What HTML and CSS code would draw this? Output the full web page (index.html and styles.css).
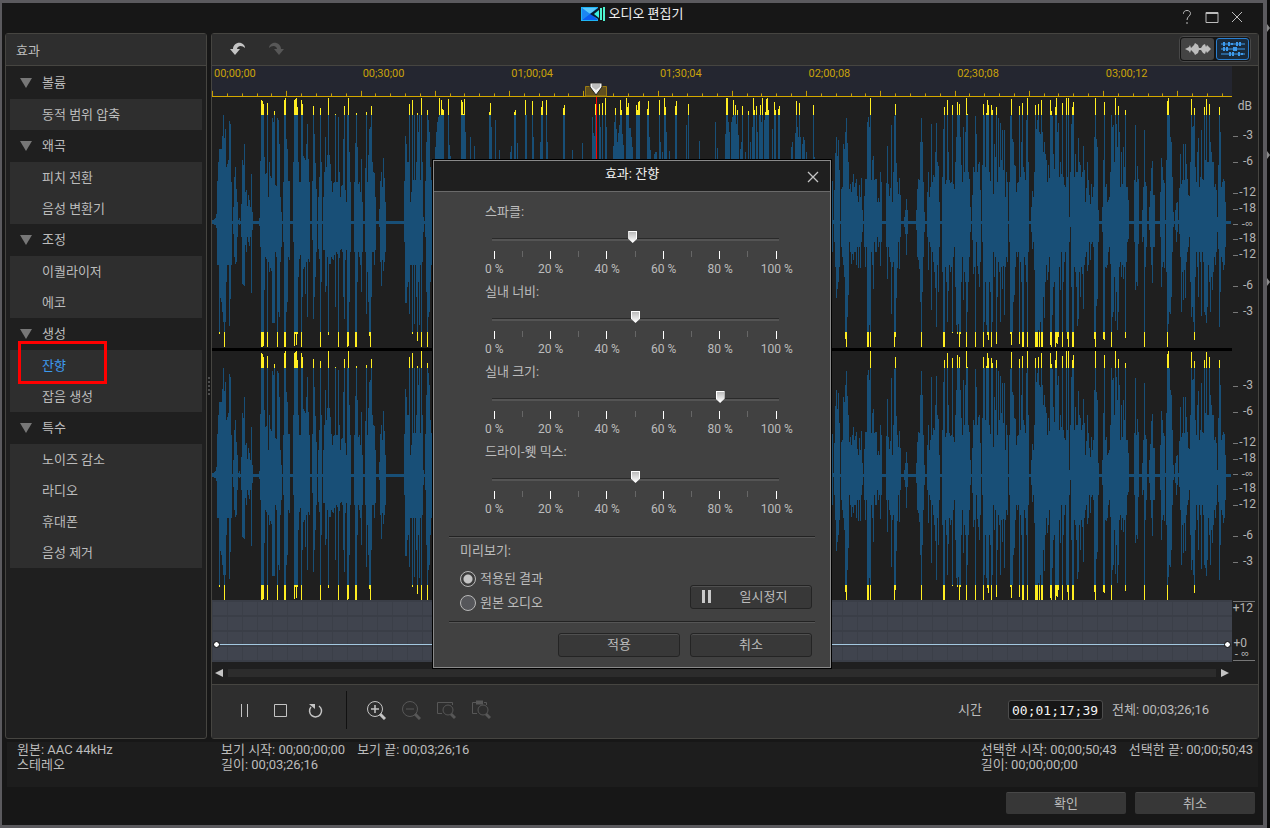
FILE: index.html
```
<!DOCTYPE html>
<html lang="ko">
<head>
    <meta charset="UTF-8">
    <meta name="viewport" content="width=device-width, initial-scale=1.0">
    <title>오디오 편집기</title>

    <link rel="stylesheet" href="styles.css">
</head>

<body>

    <div class="window">
        <div class="titlebar">
            <div class="app-title">
                <svg class="app-logo" width="24" height="14" viewBox="0 0 24 14">
                    <rect x="0" y="0" width="17" height="14" fill="#1fb4f5"/>
                    <path d="M1 13L9 6L17 13Z" fill="#0a5df0"/>
                    <path d="M1 1H16L9 7Z" fill="#5cc8fb"/>
                    <path d="M1 1V13L9 7Z" fill="#1c86f2"/>
                    <path d="M17 1L9 7L17 12Z" fill="#071a33"/>
                    <path d="M18 3V11L13 7Z" fill="#3cf0e0"/>
                    <path d="M20 1V13M23 0V14" stroke="#4df5d0" stroke-width="2"/>
                </svg>
                <h1>오디오 편집기</h1>
            </div>
            <div class="window-controls">
                <button type="button" aria-label="도움말">
                    <svg width="14" height="16" viewBox="0 0 14 16"><path d="M3.500 5V4.500C3.500 2.500 5 1.500 7 1.500S10.500 2.700 10.500 4.500C10.500 7 7 7.500 7 11M7 13V15" /></svg>
                </button>
                <button type="button" aria-label="최대화">
                    <svg width="14" height="16" viewBox="0 0 14 16"><path d="M1 3.500H13V13.500H1Z"/><path d="M1 4H13" stroke-width="2"/></svg>
                </button>
                <button type="button" aria-label="닫기">
                    <svg width="14" height="16" viewBox="0 0 14 16"><path d="M2 3L12 13M12 3L2 13"/></svg>
                </button>
            </div>
        </div>

        <div class="main">
            <div class="sidebar">
                <h2>효과</h2>
                <h3>볼륨</h3>
                <ul>
                    <li><a href="#">동적 범위 압축</a></li>
                </ul>
                <h3>왜곡</h3>
                <ul>
                    <li><a href="#">피치 전환</a></li>
                    <li><a href="#">음성 변환기</a></li>
                </ul>
                <h3>조정</h3>
                <ul>
                    <li><a href="#">이퀄라이저</a></li>
                    <li><a href="#">에코</a></li>
                </ul>
                <h3>생성</h3>
                <ul>
                    <li class="selected"><a href="#">잔향</a><span class="highlight"></span></li>
                    <li><a href="#">잡음 생성</a></li>
                </ul>
                <h3>특수</h3>
                <ul>
                    <li><a href="#">노이즈 감소</a></li>
                    <li><a href="#">라디오</a></li>
                    <li><a href="#">휴대폰</a></li>
                    <li><a href="#">음성 제거</a></li>
                </ul>
            </div>

            <div class="splitter"><i></i><i></i><i></i><i></i><i></i></div>

            <div class="editor">
                <div class="editor-header">
                    <div class="history">
                        <button type="button" aria-label="실행 취소">
                            <svg width="18" height="16" viewBox="0 0 18 16"><path d="M1 8L4 8C4 4 8 1 12 2C15 3 16 5 16 7C14 5 11 4 9 6C8 7 8 8 8 8L11 8L6 14Z" fill="#c4c4c4"/></svg>
                        </button>
                        <button type="button" aria-label="다시 실행" disabled>
                            <svg width="18" height="16" viewBox="0 0 18 16"><path d="M17 8L14 8C14 4 10 1 6 2C3 3 2 5 2 7C4 5 7 4 9 6C10 7 10 8 10 8L7 8L12 14Z" fill="#575757"/></svg>
                        </button>
                    </div>
                    <div class="view-toggle">
                        <button type="button" aria-label="단일 파형">
                            <svg width="26" height="14" viewBox="0 0 26 14"><path d="M0 7L4 5L5 3L6 6L9 3L10 1L13 3L14 6L16 6L18 3L20 2L21 5L22 3L24 5L26 7L24 9L22 11L21 9L20 12L18 11L16 8L14 8L13 11L10 13L9 11L6 8L5 11L4 9Z" fill="#bdbdbd"/></svg>
                        </button>
                        <button type="button" class="active" aria-label="다중 파형">
                            <svg width="26" height="16" viewBox="0 0 26 16"><path d="M1 3H25M1 8H25M1 13H25" stroke="#3d9bee" stroke-width="1" fill="none"/><path d="M4 1V5M9 1V5M12 2V4M17 1V5M20 1V5M4 6V10M7 6V10M14 6V10M16 6V10M10 11V15M13 11V15M19 11V15M22 12V14" stroke="#3d9bee" stroke-width="2" fill="none"/></svg>
                        </button>
                    </div>
                </div>

                <div class="tracks">
                    <div class="timeline">
                        <div class="ruler">
                            <div class="ruler-labels">
                                <span>00;00;00</span>
                                <span>00;30;00</span>
                                <span>01;00;04</span>
                                <span>01;30;04</span>
                                <span>02;00;08</span>
                                <span>02;30;08</span>
                                <span>03;00;12</span>
                            </div>
                            <svg class="ruler-ticks" viewBox="0 0 1020 7" preserveAspectRatio="none"><path id="ticks"/></svg>
                        </div>
                        <svg class="wave" viewBox="0 0 1020 249" preserveAspectRatio="none" shape-rendering="crispEdges">
                            <g id="channel">
                                <path id="wave-body" fill="#184f77"/>
                                <path id="wave-peak" fill="#ffee22"/>
                            </g>
                        </svg>
                        <div class="channel-gap"></div>
                        <svg class="wave" viewBox="0 0 1020 249" preserveAspectRatio="none" shape-rendering="crispEdges">
                            <use href="#channel"/>
                        </svg>
                        <div class="envelope"><div class="gain-line"></div></div>
                        <div class="playhead">
                            <svg width="22" height="15" viewBox="0 0 22 15"><path d="M0.500 4.500H21.500V14H0.500Z" fill="#5f4f20" stroke="#9a7a10"/><path d="M5 1H17V5L11 13L5 5Z" fill="#f4f4f4" stroke="#222"/><path d="M7 2H15V5L11 8L7 5Z" fill="#bdbdbd"/></svg>
                        </div>
                    </div>

                    <!-- level scale for both channels and the gain envelope -->
                    <svg class="scale" width="26" height="596" viewBox="0 0 26 596">
                        <path d="M1 70.500H6M1 96.500H6M1 127.500H6M1 143.500H6M1 158.500H6M1 173.500H6M1 189.500H6M1 220.500H6M1 246.500H6M1 320.500H6M1 346.500H6M1 377.500H6M1 393.500H6M1 408.500H6M1 423.500H6M1 439.500H6M1 470.500H6M1 496.500H6M1 535.500H23M1 594.500H23" stroke="#777"/>
                        <text x="20" y="44">dB</text>
                        <text x="21" y="73">-3</text>
                        <text x="21" y="99">-6</text>
                        <text x="24" y="130">-12</text>
                        <text x="24" y="146">-18</text>
                        <text x="21" y="161" class="infinity">-∞</text>
                        <text x="24" y="176">-18</text>
                        <text x="24" y="192">-12</text>
                        <text x="21" y="223">-6</text>
                        <text x="21" y="249">-3</text>
                        <text x="21" y="323">-3</text>
                        <text x="21" y="349">-6</text>
                        <text x="24" y="380">-12</text>
                        <text x="24" y="396">-18</text>
                        <text x="21" y="411" class="infinity">-∞</text>
                        <text x="24" y="426">-18</text>
                        <text x="24" y="442">-12</text>
                        <text x="21" y="473">-6</text>
                        <text x="21" y="499">-3</text>
                        <text x="21" y="546">+12</text>
                        <text x="15" y="581">+0</text>
                        <text x="17" y="591" class="infinity">- ∞</text>
                    </svg>
                </div>

                <div class="scrollbar">
                    <button type="button" aria-label="왼쪽으로"><svg width="8" height="8" viewBox="0 0 8 8"><path d="M8 0V8L0 4Z" fill="#c4c4c4"/></svg></button>
                    <div class="scroll-track"></div>
                    <button type="button" aria-label="오른쪽으로"><svg width="8" height="8" viewBox="0 0 8 8"><path d="M0 0V8L8 4Z" fill="#c4c4c4"/></svg></button>
                </div>

                <div class="transport">
                    <div class="transport-buttons">
                        <button type="button" aria-label="일시정지">
                            <svg width="20" height="20" viewBox="0 0 20 20"><path d="M7.500 4V17M13.500 4V17"/></svg>
                        </button>
                        <button type="button" aria-label="정지">
                            <svg width="20" height="20" viewBox="0 0 20 20"><path d="M4.500 4.500H16.500V16.500H4.500Z"/></svg>
                        </button>
                        <button type="button" aria-label="반복">
                            <svg width="20" height="20" viewBox="0 0 20 20"><path d="M13 6A6 6 0 1 1 5 7" stroke-width="1.500"/><path d="M3 4H9V9Z" fill="#c4c4c4" stroke="none"/></svg>
                        </button>
                    </div>
                    <div class="zoom-buttons">
                        <button type="button" aria-label="확대">
                            <svg width="20" height="20" viewBox="0 0 20 20"><circle cx="9" cy="9" r="7.500"/><path d="M5 9H13M9 5V13" stroke-width="1.500"/><path d="M14 14L19 19" stroke-width="3"/></svg>
                        </button>
                        <button type="button" aria-label="축소" disabled>
                            <svg width="20" height="20" viewBox="0 0 20 20"><circle cx="9" cy="9" r="7.500"/><path d="M5 9H13"/><path d="M14 14L19 19" stroke-width="3"/></svg>
                        </button>
                        <button type="button" aria-label="전체 보기" disabled>
                            <svg width="20" height="20" viewBox="0 0 20 20"><path d="M6 13.500H1.500V2.500H16.500V5"/><circle cx="12" cy="10" r="5"/><path d="M15 14L19 18" stroke-width="3"/></svg>
                        </button>
                        <button type="button" aria-label="선택 영역 보기" disabled>
                            <svg width="20" height="20" viewBox="0 0 20 20"><path d="M6 13.500H1.500V2.500H5M13 2.500H15.500V5"/><path d="M5 2.500H12" stroke-width="4"/><circle cx="12" cy="10" r="5"/><path d="M15 14L19 18" stroke-width="3"/></svg>
                        </button>
                    </div>
                    <div class="time">
                        <label for="time-input">시간</label>
                        <input type="text" id="time-input" value="00;01;17;39">
                        <span>전체: 00;03;26;16</span>
                    </div>
                </div>
            </div>
        </div>

        <div class="status">
            <div class="status-source">원본: AAC 44kHz<br>스테레오</div>
            <div class="status-view">
                <span>보기 시작: 00;00;00;00</span><span>보기 끝: 00;03;26;16</span><br>
                <span>길이: 00;03;26;16</span>
            </div>
            <div class="status-selection">
                <span>선택한 시작: 00;00;50;43</span><span>선택한 끝: 00;00;50;43</span><br>
                <span>길이: 00;00;00;00</span>
            </div>
        </div>

        <div class="footer">
            <button type="button">확인</button>
            <button type="button">취소</button>
        </div>
    </div>

    <svg class="edge" width="3" height="300" viewBox="0 0 3 300"><path d="M0 24L3 28L0 32ZM0 151L3 155L0 159ZM0 278L3 282L0 286Z" fill="#8a8a8a"/></svg>

    <div class="overlay">
        <form class="dialog">
            <div class="dialog-title">
                <h2>효과: 잔향</h2>
                <button type="button" aria-label="닫기">
                    <svg width="12" height="12" viewBox="0 0 12 12"><path d="M1 1L11 11M11 1L1 11" stroke="#c4c4c4" stroke-width="1.300"/></svg>
                </button>
            </div>

            <div class="sliders">
                <div class="slider">
                    <label for="sparkle">스파클:</label>
                    <input type="range" id="sparkle" min="0" max="100" value="49">
                    <svg class="slider-ticks" width="291" height="8" viewBox="0 0 291 8">
                        <path id="major" d="M4.500 0V8M60.500 0V8M116.500 0V8M173.500 0V8M229.500 0V8M286.500 0V8" stroke="#fff"/>
                        <path id="minor" d="M32.500 0V6M88.500 0V6M145.500 0V6M201.500 0V6M257.500 0V6" stroke="#666"/>
                    </svg>
                    <div class="marks"><span>0 %</span><span>20 %</span><span>40 %</span><span>60 %</span><span>80 %</span><span>100 %</span></div>
                </div>
                <div class="slider">
                    <label for="room-width">실내 너비:</label>
                    <input type="range" id="room-width" min="0" max="100" value="50">
                    <svg class="slider-ticks" width="291" height="8" viewBox="0 0 291 8"><use href="#major"/><use href="#minor"/></svg>
                    <div class="marks"><span>0 %</span><span>20 %</span><span>40 %</span><span>60 %</span><span>80 %</span><span>100 %</span></div>
                </div>
                <div class="slider">
                    <label for="room-size">실내 크기:</label>
                    <input type="range" id="room-size" min="0" max="100" value="80">
                    <svg class="slider-ticks" width="291" height="8" viewBox="0 0 291 8"><use href="#major"/><use href="#minor"/></svg>
                    <div class="marks"><span>0 %</span><span>20 %</span><span>40 %</span><span>60 %</span><span>80 %</span><span>100 %</span></div>
                </div>
                <div class="slider">
                    <label for="mix">드라이-웻 믹스:</label>
                    <input type="range" id="mix" min="0" max="100" value="50">
                    <svg class="slider-ticks" width="291" height="8" viewBox="0 0 291 8"><use href="#major"/><use href="#minor"/></svg>
                    <div class="marks"><span>0 %</span><span>20 %</span><span>40 %</span><span>60 %</span><span>80 %</span><span>100 %</span></div>
                </div>
            </div>

            <div class="preview">
                <div class="preview-options">
                    <p>미리보기:</p>
                    <label><input type="radio" name="preview" checked>적용된 결과</label>
                    <label><input type="radio" name="preview">원본 오디오</label>
                </div>
                <button type="button" class="btn btn-pause">
                    <svg width="10" height="14" viewBox="0 0 10 14"><path d="M0 0H3V13H0ZM6 0H9V13H6Z" fill="#c8c8c8"/></svg>
                    <span>일시정지</span>
                </button>
            </div>

            <div class="dialog-buttons">
                <button type="button" class="btn">적용</button>
                <button type="button" class="btn">취소</button>
            </div>
        </form>
    </div>

    <script src="wave.js"></script>
</body>

</html>
```
FILE: styles.css
```
* {
    box-sizing: border-box;
}

body {
    font-family: Roboto, "Noto Sans CJK KR", sans-serif;
    font-size: 13px;
    line-height: 16px;
    margin: 0;
    padding-right: 3px;
    min-height: 100vh;
    position: relative;
    display: flex;
    background-color: #0c0c0c;
    color: #bcbcbc;
}

h1, h2, h3, p, ul {
    margin: 0;
    padding: 0;
    font-size: 13px;
    font-weight: normal;
}

ul {
    list-style: none;
}

a {
    color: inherit;
    text-decoration: none;
}

button {
    font: inherit;
    color: inherit;
    background: none;
    border: none;
    padding: 0;
    cursor: pointer;
}

svg {
    display: block;
}

.window {
    flex: 1;
    display: flex;
    flex-direction: column;
    min-height: 100vh;
    padding: 0 4px 0 3px;
    background-color: #171717;
    border: 2px solid #5b5a5e;
    border-width: 3px 4px 3px 2px;
}

.edge {
    position: absolute;
    top: 0;
    right: 0;
}

/* title bar */
.titlebar {
    height: 30px;
    position: relative;
    display: flex;
    justify-content: center;
}

.app-title {
    display: flex;
    gap: 4px;
    height: 21px;
    align-items: center;
}

.app-title h1 {
    color: #f0f0f0;
}

.window-controls {
    position: absolute;
    right: 15px;
    top: 6px;
    display: flex;
    gap: 11px;
}

.window-controls path {
    fill: none;
    stroke: #bdbdbd;
}

/* effects list */
.main {
    flex: 1;
    display: flex;
}

.sidebar {
    width: 202px;
    padding: 0 4px;
    background-color: #1f1f1f;
    border: 1px solid #464541;
    border-radius: 3px;
}

.sidebar h2 {
    height: 32px;
    line-height: 34px;
    margin: 0 -4px 1px;
    padding-left: 10px;
    background-color: #2e2e2e;
    border-bottom: 1px solid #464541;
}

.sidebar h3 {
    height: 32px;
    line-height: 32px;
    padding-left: 10px;
    display: flex;
    align-items: center;
    gap: 10px;
}

.sidebar h3::before {
    content: "";
    border: 6px solid transparent;
    border-top: 10px solid #777;
    border-bottom: 0;
}

.sidebar ul {
    background-color: #2e2e2e;
}

.sidebar li {
    height: 31px;
    line-height: 31px;
    padding-left: 32px;
    position: relative;
}

.sidebar .selected {
    color: #3d9bee;
}

.highlight {
    position: absolute;
    left: 8px;
    top: -9px;
    width: 89px;
    height: 43px;
    border: 3px solid #ff0000;
}

.splitter {
    width: 4px;
    display: flex;
    flex-direction: column;
    align-items: center;
    justify-content: center;
    gap: 2px;
}

.splitter i {
    width: 2px;
    height: 2px;
    background-color: #4c4c4c;
}

/* editor */
.editor {
    flex: 1;
    min-width: 0;
    display: flex;
    flex-direction: column;
    background-color: #1f1f1f;
    border: 1px solid #464541;
    border-radius: 3px;
}

.editor-header {
    height: 32px;
    padding: 0 7px 2px 17px;
    display: flex;
    justify-content: space-between;
    align-items: center;
    background-color: #2e2e2e;
    border-bottom: 1px solid #464541;
}

.history {
    display: flex;
    gap: 20px;
}

.view-toggle {
    display: flex;
    gap: 2px;
    padding: 1px;
    border: 1px solid #484848;
    border-radius: 4px;
    background-color: #151515;
}

.view-toggle button {
    width: 33px;
    height: 22px;
    display: flex;
    align-items: center;
    justify-content: center;
    background-color: #444;
    border-radius: 3px;
}

.view-toggle .active {
    background-color: #182a3c;
    border: 1px solid #2a7fd0;
}

.tracks {
    display: flex;
}

.timeline {
    flex: 1;
    min-width: 0;
    position: relative;
}

.ruler {
    height: 31px;
    margin-bottom: 1px;
    display: flex;
    flex-direction: column;
    justify-content: space-between;
    background-color: #242630;
    border-bottom: 1px solid #d4a800;
}

.ruler-labels {
    display: flex;
    overflow: hidden;
    padding-left: 2px;
    font-size: 11px;
    line-height: 15px;
    color: #c9a20a;
}

.ruler-labels span {
    flex: 0 0 14.6%;
}

.ruler-ticks {
    width: 100%;
    height: 6px;
}

.ruler-ticks path {
    stroke: #d4a800;
}

.wave {
    width: 100%;
    height: 249px;
}

.channel-gap {
    height: 3px;
    margin-top: 1px;
    background-color: #000;
}

.envelope {
    height: 62px;
    padding: 43px 4px 0;
    background-color: #40444e;
    background-image: linear-gradient(#3a3e47 2px, transparent 2px), linear-gradient(90deg, #3b3f48 1px, transparent 1px);
    background-size: 15px 15px;
}

.gain-line {
    height: 2px;
    border-bottom: 1px solid #a4c8e0;
    display: flex;
    justify-content: space-between;
}

.gain-line::before,
.gain-line::after {
    content: "";
    flex: none;
    width: 5px;
    height: 5px;
    margin: -1px -2px;
    border-radius: 50%;
    background-color: #fff;
    outline: 1px solid #222;
}

.playhead {
    position: absolute;
    top: 16px;
    left: 36.6%;
    width: 22px;
    height: 300px;
}

.playhead::after {
    content: "";
    display: block;
    width: 1px;
    height: 284px;
    margin: 0 auto;
    background-color: #ff0000;
}

.scale {
    flex: none;
    overflow: visible;
}

.scale text {
    font-size: 12px;
    text-anchor: end;
    fill: #b4b4b4;
}

.scale .infinity {
    font-family: "Liberation Sans", sans-serif;
    font-size: 11px;
}

.scrollbar {
    height: 22px;
    padding: 0 29px 0 3px;
    display: flex;
    align-items: center;
    gap: 5px;
}

.scroll-track {
    flex: 1;
    height: 8px;
    background-color: #2c2c2c;
}

.transport {
    flex: 1;
    min-height: 54px;
    padding: 0 49px 3px 22px;
    display: flex;
    align-items: center;
    background-color: #2e2e2e;
    border-top: 1px solid #464541;
}

.transport-buttons,
.zoom-buttons {
    display: flex;
    gap: 15px;
}

.transport-buttons {
    gap: 16px;
    padding-right: 20px;
}

.zoom-buttons {
    height: 38px;
    align-items: center;
    padding-left: 19px;
    border-left: 1px solid #111;
}

.transport button svg {
    fill: none;
    stroke: #c4c4c4;
}

.transport button:disabled svg {
    stroke: #575757;
}

.time {
    margin-left: auto;
    display: flex;
    align-items: center;
}

.time label {
    margin-right: 26px;
}

.time input {
    width: 95px;
    height: 20px;
    margin-right: 9px;
    padding: 0 3px;
    font-family: "DejaVu Sans Mono", monospace;
    font-size: 13px;
    color: #f4f4f4;
    background-color: #161616;
    border: 1px solid #4c4c4c;
    border-radius: 3px;
}

/* bottom */
.status {
    height: 45px;
    margin: 3px 1px 0 2px;
    padding: 0 5px 0 10px;
    display: flex;
    line-height: 15px;
    background-color: #1d1d1d;
}

.status-source {
    width: 204px;
}

.status-view {
    flex: 1;
}

.status span + span {
    margin-left: 12px;
}

.footer {
    height: 38px;
    padding: 5px 4px 0;
    display: flex;
    justify-content: flex-end;
    gap: 9px;
}

.footer button {
    width: 120px;
    height: 22px;
    background-color: #373737;
    border-top: 1px solid #484848;
    border-radius: 2px;
}

/* reverb dialog */
.overlay {
    position: absolute;
    top: 0;
    right: 6px;
    bottom: 0;
    left: 0;
    display: flex;
    align-items: center;
    justify-content: center;
}

.dialog {
    width: 398px;
    background-color: #414141;
    border: 1px solid #8a8a8a;
    outline: 1px solid #000;
}

.dialog-title {
    height: 31px;
    position: relative;
    text-align: center;
    background-color: #1f1f1f;
    border-bottom: 1px solid #6a6a6a;
}

.dialog-title h2 {
    line-height: 26px;
    color: #f0f0f0;
}

.dialog-title button {
    position: absolute;
    right: 11px;
    top: 10px;
}

.sliders {
    padding: 12px 24px 0 32px;
}

.slider {
    height: 80px;
}

.slider label {
    display: block;
    padding-left: 19px;
}

.slider input {
    appearance: none;
    display: block;
    width: 291px;
    height: 14px;
    margin: 12px 0 5px 24px;
    background: linear-gradient(#2a2a2a 1px, #545454 1px) center / 287px 3px no-repeat;
}

.slider input::-webkit-slider-thumb {
    appearance: none;
    width: 9px;
    height: 12px;
    margin-bottom: 4px;
    background: linear-gradient(#bbb, #fff);
    border: 1px solid #fff;
    clip-path: polygon(0 0, 100% 0, 100% 65%, 50% 100%, 0 65%);
}

.slider-ticks {
    margin-left: 24px;
}

.marks {
    width: 339px;
    display: grid;
    grid-template-columns: repeat(6, 1fr);
    padding-top: 2px;
    font-size: 12px;
    text-align: center;
}

.preview {
    margin: 12px 15px 0;
    padding: 6px 3px 6px 11px;
    display: flex;
    justify-content: space-between;
    align-items: flex-end;
    border-top: 1px solid #222;
    border-bottom: 1px solid #222;
    box-shadow: inset 0 1px #555, 0 1px #555;
}

.preview-options label {
    display: flex;
    align-items: center;
    gap: 4px;
    height: 24px;
}

.preview-options p {
    margin-bottom: 8px;
}

.preview-options input {
    appearance: none;
    width: 16px;
    height: 16px;
    margin: 0;
    border: 1px solid #b8b8b8;
    border-radius: 50%;
    background-color: #55565a;
}

.preview-options input:checked {
    background: radial-gradient(#c4c4c4 4px, #3c3c3c 5px);
}

.btn {
    width: 122px;
    height: 24px;
    background-color: #383838;
    border: 1px solid #242424;
    border-radius: 3px;
    box-shadow: inset 0 1px #505050;
}

.btn-pause {
    display: flex;
    align-items: center;
    padding-left: 11px;
    margin-bottom: 6px;
}

.btn-pause span {
    flex: 1;
    text-align: center;
    padding-left: 4px;
}

.dialog-buttons {
    padding: 11px 18px 10px;
    display: flex;
    justify-content: flex-end;
    gap: 10px;
}
```
FILE: wave.js
```
// each run: start x, then "up down" peak heights for every column after it
const runs = `
0 2 2 2 2 3 3 4 3 8 6 41 43 60 43 73 112 73 76 73 80 86 90 107 100 84 125 93 100 55 60 58 43 62 43 101 104 98 77 40 43
21 15 12 45 35 55 42 33 40 20 15 2 2 4 3
29 18 15 62 62 57 63 78 64 30 23 32 30 16 15 27 20 22 24 15 15 48 71 10 8
47 4 4 61 25 122 125 121 125 118 124 65 68 48 35 49 37 119 125 25 40 60 50 46 46 44 49 104 101 100 101 111 101 37 30 36 35 104 125 102 90 78 95 25 40 10 25
71 40 20 122 125 124 125 83 90 73 80 41 35 41 38
81 60 20 122 124 123 112 124 123 115 112 60 55 40 37 40 33 122 125 118 75 66 47 64 45 62 72 78 40 98 95 63 37 40 40
100 41 18 116 97 88 75 59 55 33 30
106 25 27 45 37 114 125 60 60
111 25 28 50 28 85 70 55 64 67 35 124 113 67 42 58 42 41 35 30 37 39 38 40 33 108 85 40 30 40 32 105 125 50 36 25 28 36 27 37 30 83 75 116 97 32 38 20 28 107 125 124 124 70 80 40 30
142 40 30 79 125 109 125 75 60 38 30 40 35 30 43 63 70 20 30
153 54 30 110 92 40 50 67 80 93 114 95 125 116 75 60 30 50 30 49 43 25 28
167 13 5 41 40 50 64 35 38 64 49 44 40 20 30
192 41 20 86 81 78 81 60 65 60 60 118 92 20 43 30 43 122 112 42 43 107 102 42 43 60 75 109 119 90 60 107 103 42 43 124 125 60 40 5 10
213 41 15 80 70 112 125 102 95 90 90 55 60 42 43
223 75 40 90 70 100 90 105 110 124 125 107 90 122 125 113 90 112 80
236 123 125 77 50 66 40
249 122 125 120 125 108 90 123 125 90 60
258 85 50 40 30 40 30 40 30 76 50
277 110 90 119 120 95 60 40 30 40 30 40 30 102 80 40 30 40 30 40 30 72 50
298 70 50 76 50 40 30 40 30 110 90 112 115 50 40 79 50
313 122 125 107 90
320 121 125 85 60
328 80 50 115 120 121 125 50 40 50 40 50 40 122 125 80 60
351 114 120 117 125
360 72 50
370 79 50
380 105 80 89 70 86 60 118 120 105 90 40 30 40 30 118 125 95 80 60 40 119 125 50 40 50 40 124 125 95 60
401 76 50 100 80 114 120 93 70 80 60 89 60 97 80 122 125 112 120 88 60 77 50 60 40 60 40 124 125 115 120 119 125 94 70 94 70 85 60 75 50
424 117 125 112 120 120 125 121 125
435 113 120 121 125 85 60 72 50
442 68 50 70 50 70 50 50 40 50 40 122 125 80 60 50 40 70 50 50 40 124 125 115 120 90 60
457 71 50
463 116 125 121 125
474 97 80 50 40 118 125
487 81 60
503 100 80 40 30 74 50
513 88 60 124 125 124 125 100 90 90 70 50 40 100 90 105 90 122 125 107 90 117 125 98 80 112 120 87 60 50 40 73 50 80 60 116 120 50 40 50 40 70 50
536 111 120 50 40 80 60 50 40 95 80 124 125 112 120 50 40 116 125 90 70 60 50 107 90 117 125 100 80 124 125 60 50 102 80 110 90 123 125 124 125 112 120
560 93 70 50 40 120 125 112 120 50 40 50 40 113 120 116 125
579 75 50 80 60 50 40 50 40 89 60 121 125 95 70 85 60 119 125 85 60 50 40 78 50 85 60 82 60 50 40 70 50
601 117 125 65 40
620 41 30 2 2 32 20 69 45 85 76 66 67 82 60 52 45
629 33 25 35 35 78 43 73 55 90 117 104 125 79 95 60 73 33 20 38 30 30 42 40 32 48 38 35 30 39 30 43 43 26 25 20 46 37 25 25 46 44 20 12 10
652 26 25 43 45 43 25 100 125 105 125 95 103 124 125 42 30 62 43 66 67 42 20 43 30 43 30 20 15 24 25 20 20 50 44 40 20
674 39 25 76 57 38 25 26 35 34 40 97 92 20 45 50 40 106 125 118 115 59 76 40 46 28 20 44 47 27 15
692 5 5 12 12 23 33 12 12
704 12 8 33 35 43 38 42 47 80 80 104 125 80 70 40 35 10 10
715 30 15 50 48 25 20 35 25 98 88 40 30 47 40 45 50 70 66 99 105 60 43 56 70 20 25
730 45 50 93 125 115 125 38 45 42 60 122 100 70 69 42 43 39 50 40 45 117 111 38 35 33 25 60 65 85 103 120 112 107 102 118 125 85 112 57 60 40 35 95 78 50 50 90 60 124 125 108 90 50 60 43 35 15 10
760 27 18 55 52 50 45 106 125 88 20 50 44 58 52 60 65 32 40
770 57 20 118 125 107 100 55 60 109 103 122 113 117 118 50 60 41 70 117 125 112 100 28 30 78 55 65 35 115 122 40 75 104 40 55 50 99 100 62 45 92 67 52 44 92 93 25 45 50 35 40 40
797 40 20 106 112 123 123 83 110 80 80 57 73 56 45 30 30 39 35 40 30 116 122 45 40 80 60 119 125 55 125 50 35 42 43 102 60 124 125 60 30
819 15 10 31 27 25 20 50 48 117 125 93 125 102 125 118 108 90 125 88 100 122 125 90 125 70 75 80 96 68 60 62 43 40 58 57 50 44 35 122 123 111 125 106 93 68 65 53 60 115 125 124 121 90 122 99 115 45 45 60 68 48 30 119 125 45 60 37 40 35 30 124 110 45 117 124 125 5 20 50 5 98 65 115 125 120 125 45 45 68 50 50 65 50 104 84 97 60 50 57 75 45 45 50 52 76 87 52 43 20 35 34 30 60 49 42 43 27 20 18 38 38 22 25 20 35 25 85 117 124 125 83 84 75 77 12 20
890 15 10 62 117 120 118 35 45 38 46 20 43 22 30 25 25 50 42 107 125 95 95 97 90 60 55 124 99 98 70 75 108 116 90 90 45 35 40 70 55 38 43 75 57 55 45 112 116 35 40 35 20 22 17
922 42 20 97 68 40 60 56 64 43 22
930 12 20 35 15 92 125 40 45 36 25
937 15 8 31 25 54 43 61 61 27 25 27 25
948 30 15 64 65 55 45 42 40 39 46 2 2 62 50 121 125 124 102 107 90 85 92 80 75 45 30 10 5
963 12 8 19 20 20 10 2 2 34 12 68 35 38 90 42 50 78 78 42 48 78 76 58 40 43 30 27 25 26 15 60 60 123 95 95 85 96 100 114 118 55 55 40 30 70 45 84 75 35 30 45 40 92 94 43 30 42 40 115 90 62 93 123 101 60 85 60 43 118 60 80 90 70 55 60 68 60 50 35 35 38 43 32 30 5 10 57 27 115 105 90 70 35 35 40 40 43 48 41 43 20 25
`;

const centre = 124;
const clipUp = 107;
const clipDown = 110;

let body = 'M0 123H1019V126H0Z';
let peaks = '';

runs.trim().split('\n').forEach(line => {
    const n = line.split(' ').map(Number);
    let x = n[0];
    for (let i = 1; i < n.length; i += 2) {
        const up = n[i];
        const down = n[i + 1];
        body += `M${x} ${centre - Math.min(up, clipUp)}h1V${centre + Math.min(down, clipDown)}h-1Z`;
        if (up > clipUp) {
            peaks += `M${x} ${centre - up}h1V${centre - clipUp}h-1Z`;
        }
        if (down > clipDown) {
            peaks += `M${x} ${centre + clipDown}h1V${centre + down}h-1Z`;
        }
        x++;
    }
});

document.getElementById('wave-body').setAttribute('d', body);
document.getElementById('wave-peak').setAttribute('d', peaks);

// ruler ticks, every fifth one is taller
let ticks = '';
for (let i = 0; i < 69; i++) {
    const x = Math.round(i * 14.85) + 0.5;
    ticks += `M${x} ${i % 5 === 0 ? 1 : 4}V7`;
}
document.getElementById('ticks').setAttribute('d', ticks);
```
